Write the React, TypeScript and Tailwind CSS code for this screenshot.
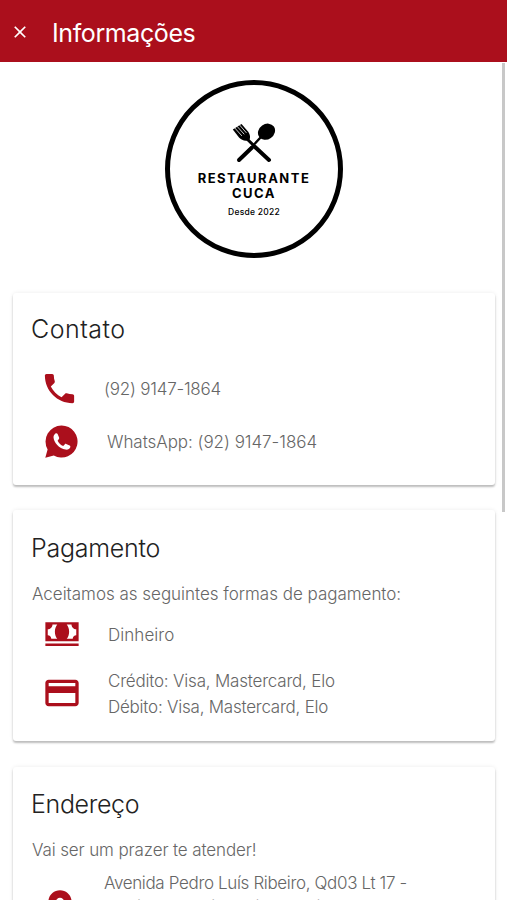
import React from "react";
import { IoMdCall, IoMdCash } from "react-icons/io";
import { MdClose, MdCreditCard, MdLocationOn } from "react-icons/md";

type CardProps = {
  title: string;
  titleClass: string;
  className: string;
  children: React.ReactNode;
};

const Card = ({ title, titleClass, className, children }: CardProps) => (
  <section
    className={`ml-[13px] mr-3 shrink-0 rounded-[3px] bg-white pl-[18px] shadow-[0_2px_2px_rgba(0,0,0,0.24),0_0_4px_rgba(0,0,0,0.08)] ${className}`}
  >
    <h2 className={`h-10 whitespace-nowrap text-[25px] font-light leading-10 text-[#222222] ${titleClass}`}>
      {title}
    </h2>
    {children}
  </section>
);

const WhatsAppIcon = () => (
  <svg width="33" height="33" viewBox="0 0 33 33" aria-hidden="true" className="shrink-0">
    <path
      d="M16.5 0.5a16 16 0 1 1-7.7 30L0.3 32.8l2.3-8.4A16 16 0 0 1 16.5 0.5z"
      fill="#ab0f1c"
    />
    <path
      d="M10.2 8.8c.7-.7 2-.6 2.4.2l1.5 3.6c.2.5.1 1-.2 1.4l-1.3 1.7c1.3 2.5 3.2 4.2 5.6 5.4l1.7-1.9c.3-.4.8-.5 1.3-.3l3.4 1.7c.7.4.9.9.7 1.6-.6 1.8-2.6 2.8-4.8 2.4-6.2-1.2-11.8-6.9-12-12.4 0-1.4.7-2.7 1.7-3.4z"
      fill="#fff"
    />
  </svg>
);

const Logo = () => (
  <div className="flex h-[178px] w-[178px] flex-col items-center rounded-full border-[5px] border-black pt-[38px] text-black">
    <svg width="44" height="40" viewBox="0 0 44 40" aria-hidden="true">
      <g stroke="#000" strokeLinecap="round" fill="none">
        <path d="M14 15 L27 27.5" strokeWidth="3" />
        <path d="M29 14 L17 27" strokeWidth="2.4" />
        <path d="M23 24 L37 37" strokeWidth="4" />
        <path d="M20 24.5 L7 37" strokeWidth="4" />
      </g>
      <ellipse cx="34.5" cy="8.7" rx="9" ry="7.6" transform="rotate(-35 34.5 8.7)" />
      <path d="M0.8 6.6 L9.5 1 L16 8.5 C18.5 12 18.4 15.5 17.2 17 C14 18.6 9.5 17.6 7 14.6Z" />
      <g stroke="#fff" strokeWidth="0.8" strokeLinecap="round">
        <path d="M2.8 5 L9.6 12.6" />
        <path d="M5.2 3.5 L12 11" />
        <path d="M7.6 2 L14.2 9.6" />
      </g>
    </svg>
    <div className="mt-[8px] whitespace-nowrap text-center text-[13px] font-bold leading-[15px] tracking-[1.5px]">
      <p>RESTAURANTE</p>
      <p>CUCA</p>
    </div>
    <p className="mt-[5px] whitespace-nowrap text-[8.5px] font-medium leading-3 tracking-[0.25px]">Desde 2022</p>
  </div>
);

export default function App() {
  return (
    <div className="relative flex h-[900px] w-[507px] flex-col overflow-hidden bg-white font-['Inter','Liberation_Sans',sans-serif] text-[17px] font-light text-[#666666]">
      <header className="flex h-[62px] shrink-0 items-center bg-[#ab0f1c] text-white">
        <MdClose size={20} className="ml-[10px] mt-[2px] shrink-0" />
        <h1 className="ml-[22px] whitespace-nowrap pt-[4px] text-[25px] font-normal leading-9 tracking-[-0.4px]">
          Informações
        </h1>
      </header>

      <div className="flex shrink-0 justify-center pb-[35px] pl-px pt-[18px]">
        <Logo />
      </div>

      <Card title="Contato" titleClass="tracking-[0.5px]" className="h-[192px] pt-4">
        <div className="mt-[13px] flex h-[52px] items-center">
          <IoMdCall size={39} color="#ab0f1c" className="ml-[9px] shrink-0" />
          <span className="ml-[25px] whitespace-nowrap pt-[4px] tracking-[-0.22px]">(92) 9147-1864</span>
        </div>
        <div className="flex h-[52px] items-center">
          <div className="ml-[14px] pt-[2px]">
            <WhatsAppIcon />
          </div>
          <span className="ml-[29px] whitespace-nowrap pt-[5px] tracking-[-0.04px]">
            WhatsApp: (92) 9147-1864
          </span>
        </div>
      </Card>

      <Card title="Pagamento" titleClass="tracking-[-0.25px]" className="mt-[25px] h-[231px] pt-[18px]">
        <p className="mt-[13px] whitespace-nowrap pl-px leading-[26px] tracking-[-0.02px]">
          Aceitamos as seguintes formas de pagamento:
        </p>
        <div className="mt-[6px] flex h-[42px] items-center">
          <IoMdCash size={38} color="#ab0f1c" className="ml-3 shrink-0" />
          <span className="ml-[27px] whitespace-nowrap pt-[3px] tracking-[0.05px]">Dinheiro</span>
        </div>
        <div className="mt-[12px] flex h-[52px] items-center">
          <MdCreditCard size={40} color="#ab0f1c" className="ml-[11px] shrink-0" />
          <div className="ml-[26px] whitespace-nowrap pt-px leading-[26px]">
            <p className="tracking-[-0.2px]">Crédito: Visa, Mastercard, Elo</p>
            <p className="tracking-[-0.23px]">Débito: Visa, Mastercard, Elo</p>
          </div>
        </div>
      </Card>

      <Card title="Endereço" titleClass="tracking-[-0.35px]" className="mt-[26px] h-[200px] pt-[17px]">
        <p className="mt-[13px] whitespace-nowrap pl-px leading-[26px] tracking-[-0.12px]">
          Vai ser um prazer te atender!
        </p>
        <div className="mt-[8px] flex">
          <MdLocationOn size={40} color="#ab0f1c" className="ml-[9px] mt-[16px] shrink-0" />
          <div className="ml-[24px] whitespace-nowrap leading-[24px]">
            <p className="tracking-[-0.35px]">Avenida Pedro Luís Ribeiro, Qd03 Lt 17 -</p>
            <p className="tracking-[0.15px]">Conjunto Residencial Cardi</p>
          </div>
        </div>
      </Card>

      {/* scroll indicator */}
      <div className="absolute right-[2px] top-[63px] h-[449px] w-[3px] bg-[#c8c8c8]" />
    </div>
  );
}
